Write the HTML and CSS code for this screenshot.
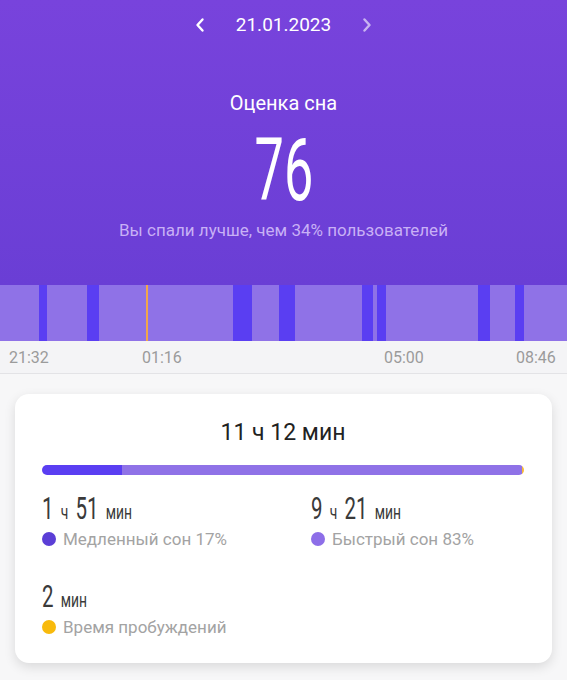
FILE: index.html
```html
<!DOCTYPE html>
<html lang="ru">
<head>
<meta charset="utf-8">
<link rel="stylesheet" href="styles.css">
</head>
<body>
<div class="header">
  <div class="date-row">
    <svg class="chev" width="12" height="16" viewBox="0 0 12 16"><path d="M8.5 2.5 L3.5 8 L8.5 13.5" fill="none" stroke="#fff" stroke-width="2.4" stroke-linecap="round" stroke-linejoin="round"/></svg>
    <span class="date">21.01.2023</span>
    <svg class="chev chev-dim" width="12" height="16" viewBox="0 0 12 16"><path d="M3.5 2.5 L8.5 8 L3.5 13.5" fill="none" stroke="#fff" stroke-width="2.4" stroke-linecap="round" stroke-linejoin="round"/></svg>
  </div>
  <div class="score-title">Оценка сна</div>
  <div class="score"><span class="score-num">76</span></div>
  <div class="score-sub">Вы спали лучше, чем 34% пользователей</div>
</div>

<div class="chart">
  <div class="seg light" style="width:39px"></div>
  <div class="seg dark" style="width:8px"></div>
  <div class="seg light" style="width:40px"></div>
  <div class="seg dark" style="width:12px"></div>
  <div class="seg light" style="width:134px"></div>
  <div class="seg dark" style="width:19px"></div>
  <div class="seg light" style="width:27px"></div>
  <div class="seg dark" style="width:16px"></div>
  <div class="seg light" style="width:67px"></div>
  <div class="seg dark" style="width:11px"></div>
  <div class="seg light" style="width:4px"></div>
  <div class="seg dark" style="width:9px"></div>
  <div class="seg light" style="width:92px"></div>
  <div class="seg dark" style="width:12px"></div>
  <div class="seg light" style="width:25px"></div>
  <div class="seg dark" style="width:9px"></div>
  <div class="seg light grow"></div>
  <div class="awake" style="left:146px"></div>
</div>

<div class="axis">
  <span class="tick" style="left:9px">21:32</span>
  <span class="tick" style="left:142px">01:16</span>
  <span class="tick" style="left:384px">05:00</span>
  <span class="tick" style="left:516px">08:46</span>
</div>

<div class="card">
  <div class="total">11 ч 12 мин</div>
  <div class="bar">
    <div class="bar-deep" style="width:16.5%"></div>
    <div class="bar-light"></div>
    <div class="bar-awake"></div>
  </div>
  <div class="stats">
    <div class="stat">
      <div class="val"><span class="val-in"><b>1</b><i>ч</i><b>51</b><i>мин</i></span></div>
      <div class="label"><span class="dot dot-deep"></span>Медленный сон 17%</div>
    </div>
    <div class="stat">
      <div class="val"><span class="val-in"><b>9</b><i>ч</i><b>21</b><i>мин</i></span></div>
      <div class="label"><span class="dot dot-light"></span>Быстрый сон 83%</div>
    </div>
    <div class="stat">
      <div class="val"><span class="val-in"><b>2</b><i>мин</i></span></div>
      <div class="label"><span class="dot dot-awake"></span>Время пробуждений</div>
    </div>
  </div>
</div>
</body>
</html>
```

FILE: styles.css
```css
* { box-sizing: border-box; }
html, body { margin: 0; padding: 0; }
body {
  width: 567px;
  height: 680px;
  overflow: hidden;
  background: #f7f7f8;
  font-family: Roboto, "Noto Sans", sans-serif;
}

.header {
  height: 285px;
  padding-top: 13px;
  background: linear-gradient(180deg, #7843dc 0%, #6a3ed5 100%);
  color: #fff;
  text-align: center;
}
.date-row {
  display: flex;
  justify-content: center;
  align-items: center;
  gap: 30px;
  height: 24px;
}
.date {
  font-size: 19px;
  line-height: 24px;
}
.chev { display: block; }
.chev-dim { opacity: 0.6; }

.score-title {
  margin-top: 54px;
  font-size: 20px;
  line-height: 24px;
}
.score {
  margin-top: 12px;
  height: 87px;
  font-size: 87px;
  line-height: 87px;
}
.score-num {
  display: inline-block;
  transform: scaleX(0.6);
}
.score-sub {
  margin-top: 6px;
  font-size: 17px;
  line-height: 20px;
  color: rgba(226, 210, 255, 0.78);
}

.chart {
  position: relative;
  display: flex;
  height: 56px;
}
.seg { height: 100%; flex: none; }
.seg.grow { flex: 1; }
.light { background: #8f72e7; }
.dark { background: #5a3ef2; }
.awake {
  position: absolute;
  top: 0;
  bottom: 0;
  width: 2px;
  background: #f2a64a;
}

.axis {
  position: relative;
  height: 33px;
  background: #f4f4f6;
  border-bottom: 1px solid #e3e3e6;
}
.tick {
  position: absolute;
  top: 7px;
  font-size: 16px;
  line-height: 20px;
  color: #9b9b9b;
}

.card {
  margin: 20px 15px 0;
  height: 269px;
  padding: 25px 28px 0 27px;
  background: #fff;
  border-radius: 14px;
  box-shadow: 0 4px 12px rgba(0, 0, 0, 0.12);
}
.total {
  text-align: center;
  font-size: 23px;
  line-height: 28px;
  color: #222;
}
.bar {
  margin-top: 18px;
  height: 10px;
  border-radius: 5px;
  overflow: hidden;
  display: flex;
}
.bar-deep { background: #5a3ef2; }
.bar-light { background: #8f72e7; flex: 1; }
.bar-awake { background: #f6b93a; width: 2px; }

.stats {
  display: grid;
  grid-template-columns: 269px 1fr;
  margin-top: 16px;
  row-gap: 30px;
}
.val {
  height: 36px;
  line-height: 36px;
  color: #3a3a3a;
  white-space: nowrap;
}
.val-in {
  display: inline-flex;
  align-items: baseline;
  gap: 11px;
  transform: scaleX(0.66);
  transform-origin: 0 50%;
}
.val b { font-weight: 400; font-size: 31px; }
.val i { font-style: normal; font-size: 21px; }
.label {
  margin-top: 2px;
  display: flex;
  align-items: center;
  gap: 7px;
  font-size: 17px;
  line-height: 20px;
  color: #a3a3a3;
}
.dot {
  width: 14px;
  height: 14px;
  border-radius: 50%;
  flex: none;
}
.dot-deep { background: #5b3ed6; }
.dot-light { background: #8d6ee8; }
.dot-awake { background: #f8ba0c; }
```
